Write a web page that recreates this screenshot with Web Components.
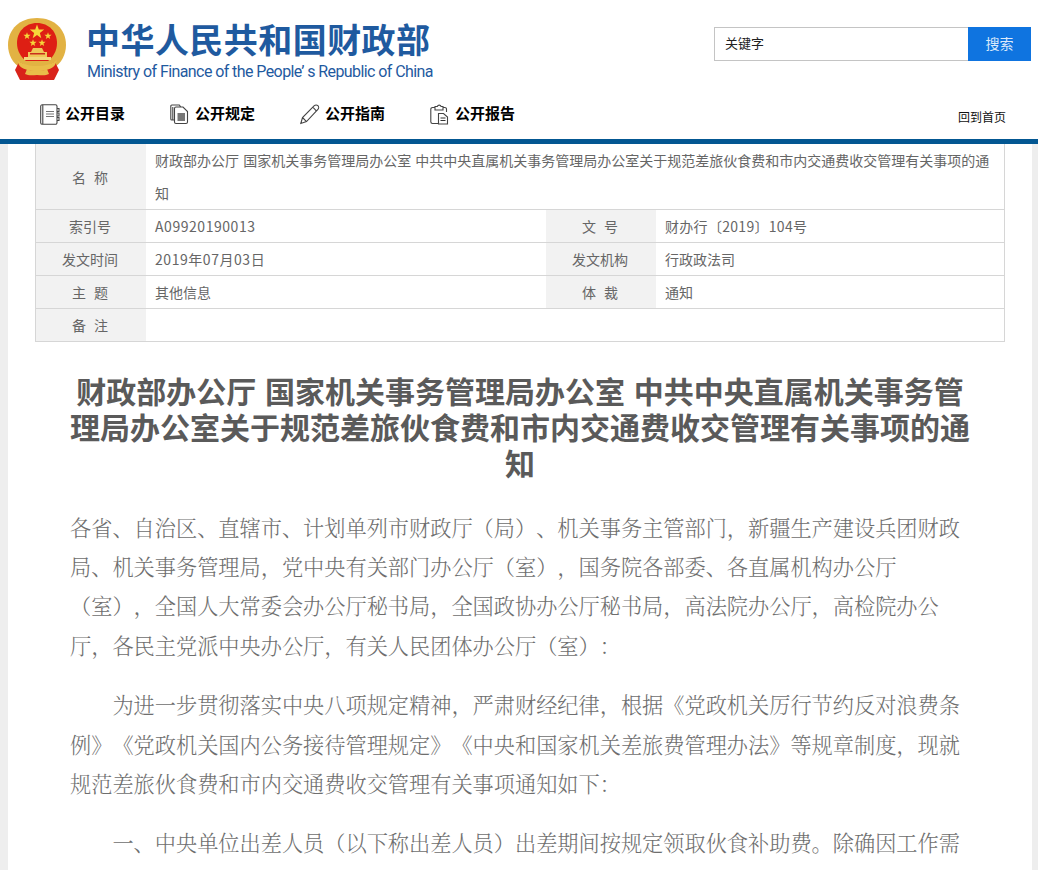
<!DOCTYPE html>
<html lang="zh">
<head>
<meta charset="utf-8">
<title>财政部</title>
<style>
    html, body { margin: 0; padding: 0; background: #eee; }
    body { font-family: "Noto Sans CJK SC", "Liberation Sans", sans-serif; overflow: hidden; height: 870px; display: flex; flex-direction: column; text-spacing-trim: space-all; }
    site-header, main-nav { flex: none; }
    doc-page { flex: 1; min-height: 0; overflow: hidden; }
</style>
</head>
<body>
<site-header></site-header>
<main-nav></main-nav>
<doc-page>
    <info-table></info-table>
    <doc-article></doc-article>
</doc-page>

<script>
class SiteHeader extends HTMLElement {
    constructor() {
        super();
        this.attachShadow({ mode: 'open' });
    }

    connectedCallback() {
        this.shadowRoot.innerHTML = `
            <style>
                :host { display: flex; justify-content: space-between; height: 92px; padding: 0 7px 0 8px; box-sizing: border-box; background: #fff; }
                .brand { display: flex; align-items: flex-start; padding-top: 18px; }
                svg { width: 58px; height: 62px; display: block; }
                .names { margin-left: 20px; padding-top: 3px; color: #1f5a9f; }
                .cn { font: 700 34px/40px "Liberation Sans", "Noto Sans CJK SC", sans-serif; letter-spacing: .45px; white-space: nowrap; }
                .en { font: 400 16px/20px Roboto, sans-serif; white-space: nowrap; letter-spacing: -.58px; margin: 1px 0 0 1px; }
                form { display: flex; height: 34px; margin-top: 27px; }
                .kw { width: 254px; box-sizing: border-box; border: 1px solid #c4c4c4; border-right: 0; font: 13px/30px "Noto Sans CJK SC", sans-serif; color: #222; padding-left: 10px; }
                .btn { width: 63px; background: #0f74e0; color: #dbe9fa; font: 14px/32px "Noto Sans CJK SC", sans-serif; text-align: center; }
            </style>
            <div class="brand">
                <svg viewBox="0 0 58 62">
                    <defs><path id="s" d="M0-5l1.200 3.400h3.600l-2.900 2.200 1 3.500-2.900-2.100-2.900 2.100 1-3.500-2.900-2.200h3.600z"/></defs>
                    <path d="M29 0C12 0 0 11 0 27c0 10 5 18 11 22h36c6-4 11-12 11-22C58 11 46 0 29 0z" fill="#e2b243"/>
                    <path d="M29 5C17 5 9 14 9 25c0 8 4 14 9 18h22c5-4 9-10 9-18C49 14 41 5 29 5z" fill="#de1f14"/>
                    <g fill="#f6d63a">
                        <use href="#s" transform="translate(29 14) scale(1.500)"/>
                        <use href="#s" transform="translate(19 18) scale(.75)"/>
                        <use href="#s" transform="translate(40 18) scale(.75)"/>
                        <use href="#s" transform="translate(25 25) scale(.75)"/>
                        <use href="#s" transform="translate(34 25) scale(.75)"/>
                    </g>
                    <path d="M23 34l2-4h9l2 4zM20 34h19v5H20z" fill="#efc858"/>
                    <path d="M22 35h15v1.500H22z" fill="#c9301c"/>
                    <path d="M16 39h27v3H16z" fill="#f3d67c"/>
                    <path d="M7 52l4-8 8 4h20l8-4 4 8-5 10H12z" fill="#d9231a"/>
                    <path d="M9 42c5 4 12 6 20 6s15-2 20-6l-2 5c-3 4-10 6-18 6s-15-2-18-6z" fill="#e9bd49"/>
                    <path d="M19 51c3 2 6 1 10 1s7 1 10-1l2 5c-4 2-8 1-12 1s-8 1-12-1z" fill="#e9bd49"/>
                </svg>
                <div class="names">
                    <div class="cn">中华人民共和国财政部</div>
                    <div class="en">Ministry of Finance of the People’ s Republic of China</div>
                </div>
            </div>
            <form>
                <div class="kw">关键字</div>
                <div class="btn">搜索</div>
            </form>
        `;
    }
}

class MainNav extends HTMLElement {
    constructor() {
        super();
        this.attachShadow({ mode: 'open' });
    }

    connectedCallback() {
        const icons = {
            book: '<path d="M2 .7h13.500A1.500 1.500 0 0 1 17 2.200v16.600a1.500 1.500 0 0 1-1.500 1.500H2A1.500 1.500 0 0 1 .7 18.800V2.200A1.500 1.500 0 0 1 2 .7zM2.800 1v19M17 4.500h2v3h-2M17 9h2v3h-2M17 13.500h2v3h-2"/><path d="M6 7.500h8M6 10h8M6 12.500h8" stroke="#777"/>',
            docs: '<path d="M4 16H1.800a1 1 0 0 1-1-1V2a1 1 0 0 1 1-1h7.500l1.500 2M6 19.500a1.500 1.500 0 0 1-1.500-1.500V4.500A1.500 1.500 0 0 1 6 3h7l4.500 4.500V18a1.500 1.500 0 0 1-1.500 1.500zM2.800 16V3"/><path d="M7.500 9h7.500v8H7.500z" fill="#777" stroke="none"/>',
            pencil: '<path d="M.8 19.500l1.700-6L14.300 1.700c1-1 2.600-1 3.600 0s1 2.600 0 3.600L6.500 17.600zM2.500 13.500l4 4.100M12.800 3.200l4 4.100"/>',
            clip: '<path d="M5 3.500H2.500A1.700 1.700 0 0 0 .8 5.200v12.600a1.700 1.700 0 0 0 1.700 1.700H8M13 3.500h1.800a1.700 1.700 0 0 1 1.700 1.700V8M5 6V2.500h2.300a2 2 0 0 1 3.800 0H13V6z"/><path d="M8.500 9.500h5l4 3.500v7h-9z"/><path d="M10.500 14h5M10.500 16.500h5" stroke="#333"/>'
        };
        const items = [['book', '公开目录'], ['docs', '公开规定'], ['pencil', '公开指南'], ['clip', '公开报告']];
        this.shadowRoot.innerHTML = `
            <style>
                :host { display: flex; align-items: flex-start; height: 52px; padding-left: 40px; padding-right: 32px; box-sizing: border-box; border-bottom: 5px solid #035792; background: #fff; }
                a { display: flex; align-items: center; width: 130px; height: 24px; margin-top: 9px; color: #000; font: 700 15px/24px "Noto Sans CJK SC", sans-serif; }
                svg { width: 20px; height: 21px; margin: 2px 5px 0 0; fill: none; stroke: #444; stroke-width: 1.100; flex: none; }
                .home { margin: 15px 0 0 auto; font: 12px/20px "Noto Sans CJK SC", sans-serif; color: #111; }
            </style>
            ${items.map(([icon, label]) => `<a><svg viewBox="0 0 20 21">${icons[icon]}</svg>${label}</a>`).join('')}
            <span class="home">回到首页</span>
        `;
    }
}

class DocPage extends HTMLElement {
    constructor() {
        super();
        this.attachShadow({ mode: 'open' });
    }

    connectedCallback() {
        this.shadowRoot.innerHTML = `
            <style>
                :host { display: block; background: #fff; margin: 0 6px 0 8px; padding: 0 27px; }
            </style>
            <slot></slot>
        `;
    }
}

class InfoTable extends HTMLElement {
    constructor() {
        super();
        this.attachShadow({ mode: 'open' });
    }

    connectedCallback() {
        this.shadowRoot.innerHTML = `
            <style>
                :host { display: block; font: 14px/33px "Noto Sans CJK SC", "Liberation Sans", sans-serif; color: #666; }
                .grid { display: grid; grid-template-columns: 110px 400px 110px 1fr; border: 1px solid #d6d6d6; border-top: 0; }
                .grid > div { border-bottom: 1px solid #d6d6d6; padding: 0 12px 0 9px; height: 32px; }
                .grid > div:nth-last-child(-n+2) { border-bottom: 0; }
                .k { background: #f2f2f2; padding: 0 2px 0 0 !important; text-align: center; word-spacing: 5px; }
                .wide { grid-column: 2 / -1; word-spacing: 1px; }
                .tall { height: 65px !important; }
                .k.tall { line-height: 66px; }
                .num { letter-spacing: .55px; }
                .ref { letter-spacing: .3px; }
            </style>
            <div class="grid">
                <div class="k tall">名 称</div>
                <div class="wide tall">财政部办公厅 国家机关事务管理局办公室 中共中央直属机关事务管理局办公室关于规范差旅伙食费和市内交通费收交管理有关事项的通知</div>
                <div class="k">索引号</div><div class="num">A09920190013</div>
                <div class="k">文 号</div><div class="ref">财办行〔2019〕104号</div>
                <div class="k">发文时间</div><div class="num">2019年07月03日</div>
                <div class="k">发文机构</div><div>行政政法司</div>
                <div class="k">主 题</div><div>其他信息</div>
                <div class="k">体 裁</div><div>通知</div>
                <div class="k">备 注</div><div class="wide"></div>
            </div>
        `;
    }
}

class DocArticle extends HTMLElement {
    constructor() {
        super();
        this.attachShadow({ mode: 'open' });
    }

    connectedCallback() {
        this.shadowRoot.innerHTML = `
            <style>
                :host { display: block; padding: 30px 35px 0; color: #6e6e6e; text-spacing-trim: space-all; }
                h1 { margin: 0 0 27.500px; text-align: center; font: 700 30px/36px "Noto Sans CJK SC", sans-serif; word-spacing: 2px; color: #5a5a5a; }
                p { margin: 0 0 20px; font: 300 21.200px/39.400px "Noto Serif CJK SC", "Noto Sans CJK SC", serif; }
                .in { text-indent: 2em; }
            </style>
            <h1>财政部办公厅 国家机关事务管理局办公室 中共中央直属机关事务管理局办公室关于规范差旅伙食费和市内交通费收交管理有关事项的通知</h1>
            <p>各省、自治区、直辖市、计划单列市财政厅（局）、机关事务主管部门，新疆生产建设兵团财政局、机关事务管理局，党中央有关部门办公厅（室），国务院各部委、各直属机构办公厅（室），全国人大常委会办公厅秘书局，全国政协办公厅秘书局，高法院办公厅，高检院办公厅，各民主党派中央办公厅，有关人民团体办公厅（室）：</p>
            <p class="in">为进一步贯彻落实中央八项规定精神，严肃财经纪律，根据《党政机关厉行节约反对浪费条例》《党政机关国内公务接待管理规定》《中央和国家机关差旅费管理办法》等规章制度，现就规范差旅伙食费和市内交通费收交管理有关事项通知如下：</p>
            <p class="in">一、中央单位出差人员（以下称出差人员）出差期间按规定领取伙食补助费。除确因工作需</p>
        `;
    }
}

customElements.define('site-header', SiteHeader);
customElements.define('main-nav', MainNav);
customElements.define('doc-page', DocPage);
customElements.define('info-table', InfoTable);
customElements.define('doc-article', DocArticle);
</script>
</body>
</html>
